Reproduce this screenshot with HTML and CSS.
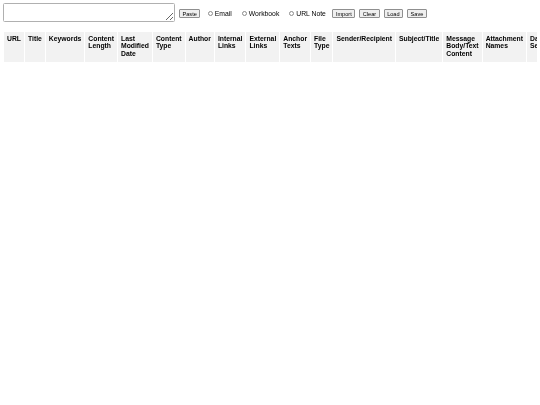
FILE: index.html
```html
<!DOCTYPE html>
<html lang="en">

<head>
    <meta charset="UTF-8">
    <meta name="viewport" content="width=device-width, initial-scale=1.0">
    <title>Link Collector</title>
    <link rel="stylesheet" href="styles.css">
</head>

<body>
    <div class="toolbar">
        <textarea id="inputBox" class="input-box"></textarea>
        <button class="btn" onclick="pasteInput()">Paste</button>
        <label class="choice"><input type="radio" name="kind" value="email"> Email</label>
        <label class="choice"><input type="radio" name="kind" value="workbook"> Workbook</label>
        <label class="choice"><input type="radio" name="kind" value="url"> URL Note</label>
        <button class="btn">Import</button>
        <button class="btn" onclick="clearRows()">Clear</button>
        <button class="btn">Load</button>
        <button class="btn">Save</button>
    </div>

    <table class="results">
        <thead>
            <tr>
                <th>URL</th>
                <th>Title</th>
                <th>Keywords</th>
                <th>Content Length</th>
                <th>Last Modified Date</th>
                <th>Content Type</th>
                <th>Author</th>
                <th>Internal Links</th>
                <th>External Links</th>
                <th>Anchor Texts</th>
                <th>File Type</th>
                <th>Sender/Recipient</th>
                <th>Subject/Title</th>
                <th>Message Body/Text Content</th>
                <th>Attachment Names</th>
                <th>Date Sent</th>
            </tr>
        </thead>
        <tbody id="resultRows"></tbody>
    </table>

    <script>
        function pasteInput() {
            navigator.clipboard.readText().then(text => {
                document.getElementById('inputBox').value = text;
            });
        }

        function clearRows() {
            document.getElementById('inputBox').value = '';
            document.getElementById('resultRows').innerHTML = '';
        }
    </script>
</body>

</html>
```

FILE: styles.css
```css
body {
    margin: 3px;
    font-family: "Liberation Sans", Arial, sans-serif;
    font-size: 6.8px;
    color: #000;
}

.toolbar {
    display: flex;
    align-items: center;
    gap: 4px;
}

.input-box {
    box-sizing: border-box;
    width: 172px;
    height: 19px;
    margin: 0;
    border: 1px solid #b0b0b0;
    border-radius: 1.5px;
}

.btn {
    font-family: "Liberation Sans", Arial, sans-serif;
    font-size: 5.6px;
    padding: 0.5px 2.5px;
    margin: 2px 0 0;
    background-color: #efefef;
    border: 1px solid #8f8f8f;
    border-radius: 1px;
    color: #000;
}

.choice {
    display: flex;
    align-items: center;
    gap: 2px;
    margin: 1px 2.5px 0 3.5px;
}

.choice input {
    appearance: none;
    width: 5px;
    height: 5px;
    margin: 0;
    border: 0.6px solid #8a8a8a;
    border-radius: 50%;
}

.results {
    margin-top: 8.5px;
    border-spacing: 1px;
}

.results th {
    padding: 3px 3px 5px;
    line-height: 7.6px;
    background-color: #f2f2f2;
    text-align: left;
    vertical-align: top;
    font-weight: bold;
}
```
